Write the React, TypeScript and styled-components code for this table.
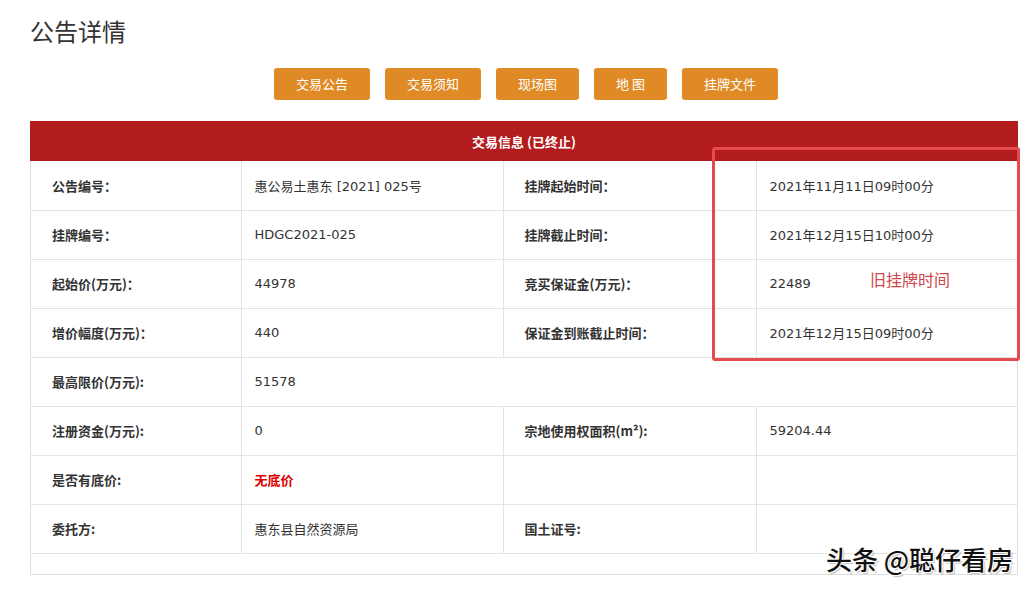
import React from "react";
import styled, { createGlobalStyle } from "styled-components";

const GlobalStyle = createGlobalStyle`
  html, body {
    margin: 0;
    padding: 0;
    background: #ffffff;
  }
  body {
    font-family: "Noto Sans CJK SC", "Noto Sans", sans-serif;
    color: #333;
  }
`;

const Page = styled.div`
  position: relative;
  width: 1031px;
  height: 591px;
  box-sizing: border-box;
  padding: 0 13px 0 30px;
  overflow: hidden;
`;

const Title = styled.h1`
  margin: 14px 0 0;
  font-size: 24px;
  line-height: 34px;
  font-weight: normal;
  color: #333;
  font-family: "Noto Sans CJK SC", sans-serif;
`;

const ButtonBar = styled.div`
  display: flex;
  justify-content: center;
  gap: 15px;
  margin-top: 20px;
  padding-left: 4px;
`;

const TabButton = styled.button`
  height: 32px;
  padding: 0 22px 2px;
  border: none;
  border-radius: 3px;
  background: #e08a26;
  color: #fff;
  font-size: 13px;
  font-family: "Noto Sans CJK SC", sans-serif;
  cursor: pointer;
`;

const Panel = styled.div`
  margin-top: 21px;
  border: 1px solid #dedede;
  border-top: none;
  padding-bottom: 20px;
`;

const PanelHeader = styled.div`
  height: 40px;
  margin: 0 -1px;
  background: #b21c1c;
  color: #fff;
  font-size: 13px;
  font-weight: bold;
  display: flex;
  align-items: center;
  justify-content: center;
  font-family: "Noto Sans CJK SC", sans-serif;
`;

const Table = styled.table`
  width: 100%;
  border-collapse: collapse;
  table-layout: fixed;
`;

const Row = styled.tr`
  height: 49px;
`;

const Cell = styled.td<{ $label?: boolean; $pad: number; $red?: boolean }>`
  box-sizing: border-box;
  border-bottom: 1px solid #e3e3e3;
  padding: 0 0 0 ${(p) => p.$pad}px;
  font-size: 13px;
  vertical-align: middle;
  color: ${(p) => (p.$red ? "#e00000" : "#333")};
  font-weight: ${(p) => (p.$label || p.$red ? "bold" : "normal")};
  font-family: ${(p) =>
    p.$label || p.$red
      ? `"Noto Sans CJK SC", sans-serif`
      : `"DejaVu Sans", "Noto Sans CJK SC", sans-serif`};
  & + & {
    border-left: 1px solid #e3e3e3;
  }
`;

const Annotation = styled.div`
  position: absolute;
  left: 712px;
  top: 147px;
  width: 308px;
  height: 214px;
  box-sizing: border-box;
  border: 3px solid #e34b50;
  border-radius: 3px;
  pointer-events: none;
`;

const AnnotationText = styled.div`
  position: absolute;
  left: 870px;
  top: 267px;
  font-size: 16px;
  color: #cc474b;
  font-family: "Noto Sans CJK SC", sans-serif;
`;

const Watermark = styled.div`
  position: absolute;
  left: 826px;
  top: 540px;
  font-size: 26px;
  font-weight: 500;
  color: #111;
  font-family: "Noto Sans CJK SC", sans-serif;
  text-shadow: 1px 1px 0 #fff, -1px -1px 0 #fff, 1px -1px 0 #fff, -1px 1px 0 #fff,
    2px 2px 1px rgba(0, 0, 0, 0.25);
  white-space: nowrap;
`;

type C = { text?: React.ReactNode; label?: boolean; red?: boolean; span?: number };

const rows: C[][] = [
  [
    { text: "公告编号：", label: true },
    { text: "惠公易土惠东 [2021] 025号" },
    { text: "挂牌起始时间：", label: true },
    { text: "2021年11月11日09时00分" },
  ],
  [
    { text: "挂牌编号：", label: true },
    { text: "HDGC2021-025" },
    { text: "挂牌截止时间：", label: true },
    { text: "2021年12月15日10时00分" },
  ],
  [
    { text: "起始价(万元)：", label: true },
    { text: "44978" },
    { text: "竞买保证金(万元)：", label: true },
    { text: "22489" },
  ],
  [
    { text: "增价幅度(万元)：", label: true },
    { text: "440" },
    { text: "保证金到账截止时间：", label: true },
    { text: "2021年12月15日09时00分" },
  ],
  [
    { text: "最高限价(万元):", label: true },
    { text: "51578", span: 3 },
  ],
  [
    { text: "注册资金(万元):", label: true },
    { text: "0" },
    { text: <>宗地使用权面积(m²):</>, label: true },
    { text: "59204.44" },
  ],
  [
    { text: "是否有底价:", label: true },
    { text: "无底价", red: true },
    { text: "", label: true },
    { text: "" },
  ],
  [
    { text: "委托方:", label: true },
    { text: "惠东县自然资源局" },
    { text: "国土证号:", label: true },
    { text: "" },
  ],
];

const buttons = ["交易公告", "交易须知", "现场图", "地 图", "挂牌文件"];

export default function App() {
  return (
    <>
      <GlobalStyle />
      <Page>
        <Title>公告详情</Title>
        <ButtonBar>
          {buttons.map((b) => (
            <TabButton key={b}>{b}</TabButton>
          ))}
        </ButtonBar>
        <Panel>
          <PanelHeader>交易信息 (已终止)</PanelHeader>
          <Table>
            <colgroup>
              <col style={{ width: 210 }} />
              <col style={{ width: 262 }} />
              <col style={{ width: 253 }} />
              <col />
            </colgroup>
            <tbody>
              {rows.map((r, i) => (
                <Row key={i}>
                  {r.map((c, j) => (
                    <Cell
                      key={j}
                      colSpan={c.span}
                      $label={c.label}
                      $red={c.red}
                      $pad={c.label ? 21 : 13}
                    >
                      {c.text}
                    </Cell>
                  ))}
                </Row>
              ))}
            </tbody>
          </Table>
        </Panel>
        <Annotation />
        <AnnotationText>旧挂牌时间</AnnotationText>
        <Watermark>头条 @聪仔看房</Watermark>
      </Page>
    </>
  );
}
